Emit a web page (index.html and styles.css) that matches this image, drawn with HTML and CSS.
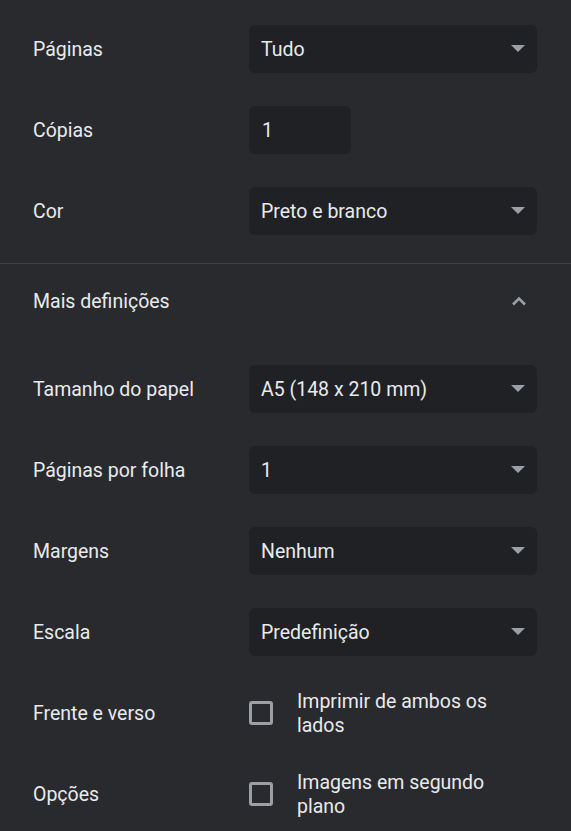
FILE: index.html
```
<!DOCTYPE html>
<html lang="pt">
<head>
<meta charset="utf-8">
<link rel="stylesheet" href="styles.css">
</head>
<body>
<div class="panel">
  <section class="group first">
    <div class="row">
      <div class="label">Páginas</div>
      <div class="select"><span>Tudo</span><svg class="arrow" viewBox="0 0 16 8"><path d="M1 0h14L8 7z"/></svg></div>
    </div>
    <div class="row">
      <div class="label">Cópias</div>
      <div class="input"><span>1</span></div>
    </div>
    <div class="row">
      <div class="label">Cor</div>
      <div class="select"><span>Preto e branco</span><svg class="arrow" viewBox="0 0 16 8"><path d="M1 0h14L8 7z"/></svg></div>
    </div>
  </section>
  <div class="divider"></div>
  <div class="more">
    <span>Mais definições</span>
    <svg class="chevron" viewBox="0 0 16 10"><path d="M2 8.5L8 2.5l6 6" fill="none" stroke="#9aa0a6" stroke-width="2.6"/></svg>
  </div>
  <section class="group second">
    <div class="row">
      <div class="label">Tamanho do papel</div>
      <div class="select"><span>A5 (148 x 210 mm)</span><svg class="arrow" viewBox="0 0 16 8"><path d="M1 0h14L8 7z"/></svg></div>
    </div>
    <div class="row">
      <div class="label">Páginas por folha</div>
      <div class="select"><span>1</span><svg class="arrow" viewBox="0 0 16 8"><path d="M1 0h14L8 7z"/></svg></div>
    </div>
    <div class="row">
      <div class="label">Margens</div>
      <div class="select"><span>Nenhum</span><svg class="arrow" viewBox="0 0 16 8"><path d="M1 0h14L8 7z"/></svg></div>
    </div>
    <div class="row">
      <div class="label">Escala</div>
      <div class="select"><span>Predefinição</span><svg class="arrow" viewBox="0 0 16 8"><path d="M1 0h14L8 7z"/></svg></div>
    </div>
    <div class="row">
      <div class="label">Frente e verso</div>
      <div class="check"><span class="box"></span><span class="ctext">Imprimir de ambos os lados</span></div>
    </div>
    <div class="row">
      <div class="label">Opções</div>
      <div class="check"><span class="box"></span><span class="ctext">Imagens em segundo plano</span></div>
    </div>
  </section>
</div>
</body>
</html>
```
FILE: styles.css
```
html, body {
  margin: 0;
  padding: 0;
  background: #292a2d;
}
body {
  font-family: Roboto, "Noto Sans", Arial, sans-serif;
  font-size: 19.5px;
  color: #e8eaed;
  width: 571px;
  height: 831px;
  overflow: hidden;
}
.panel {
  display: flex;
  flex-direction: column;
}
.group {
  display: flex;
  flex-direction: column;
  gap: 33px;
  padding: 0 34px 0 33px;
}
.group.first {
  padding-top: 25px;
  padding-bottom: 28px;
}
.group.second {
  padding-top: 29px;
}
.row {
  display: flex;
  align-items: center;
  height: 48px;
}
.label {
  width: 216px;
  flex: none;
}
.select {
  flex: 1;
  height: 48px;
  background: #202124;
  border-radius: 6px;
  display: flex;
  align-items: center;
  justify-content: space-between;
  padding: 0 11px 0 12px;
  box-sizing: border-box;
}
.arrow {
  width: 16px;
  height: 8px;
  fill: #9aa0a6;
}
.input {
  width: 102px;
  height: 48px;
  background: #202124;
  border-radius: 6px;
  display: flex;
  align-items: center;
  padding-left: 13px;
  box-sizing: border-box;
}
.divider {
  height: 1px;
  background: #3c4043;
}
.more {
  height: 72px;
  box-sizing: border-box;
  display: flex;
  align-items: center;
  justify-content: space-between;
  padding: 2px 44px 0 33px;
}
.chevron {
  width: 16px;
  height: 10px;
}
.check {
  display: flex;
  align-items: center;
  flex: 1;
}
.box {
  width: 24px;
  height: 24px;
  box-sizing: border-box;
  border: 3px solid #9aa0a6;
  border-radius: 3px;
  flex: none;
  margin-right: 24px;
}
.ctext {
  line-height: 24px;
  width: 210px;
  margin-top: 2px;
}
```
